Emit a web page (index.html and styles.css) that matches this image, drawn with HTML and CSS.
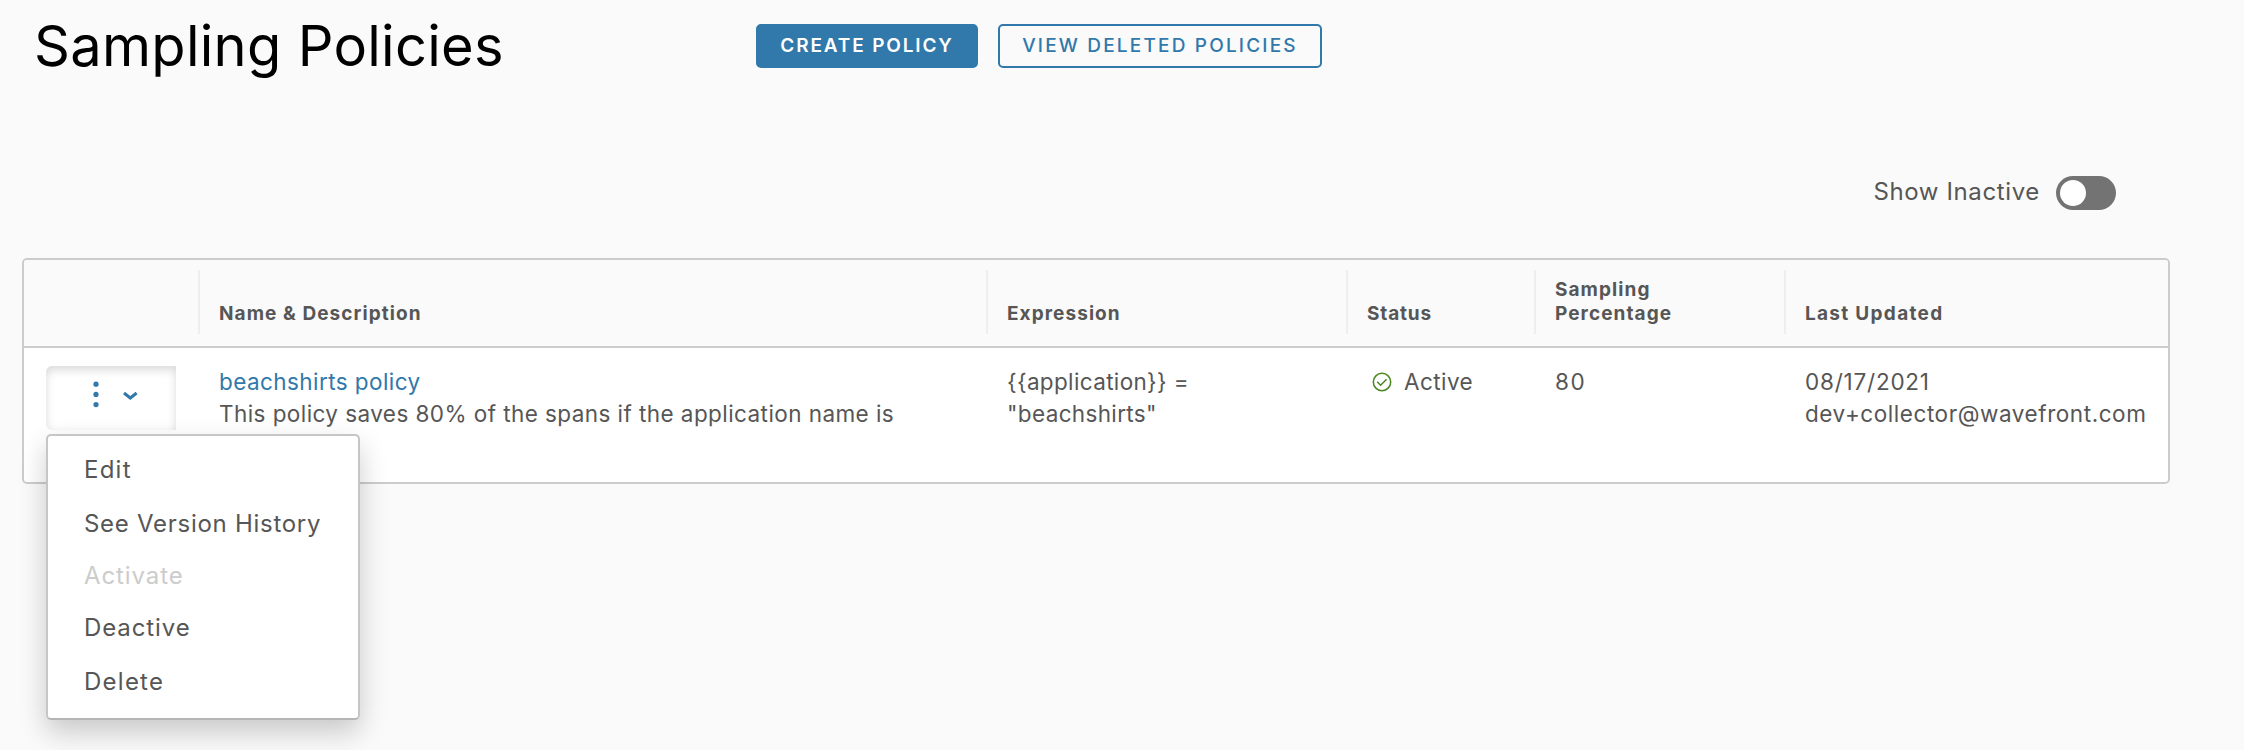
FILE: index.html
```
<!DOCTYPE html>
<html lang="en">
<head>
<meta charset="utf-8">
<title>Sampling Policies</title>
<link rel="stylesheet" href="styles.css">
</head>
<body>
<header class="page-header">
  <h1 class="page-title">Sampling Policies</h1>
  <button class="btn btn-primary">CREATE POLICY</button>
  <button class="btn btn-outline">VIEW DELETED POLICIES</button>
</header>

<div class="filters">
  <span class="toggle-label">Show Inactive</span>
  <span class="toggle" role="switch" aria-checked="false"><span class="toggle-knob"></span></span>
</div>

<main class="grid">
  <div class="grid-row grid-head">
    <div class="head-cell head-actions"></div>
    <div class="head-cell">Name &amp; Description</div>
    <div class="head-cell">Expression</div>
    <div class="head-cell head-status">Status</div>
    <div class="head-cell">Sampling<br>Percentage</div>
    <div class="head-cell head-updated">Last Updated</div>
  </div>
  <div class="grid-row grid-body">
    <div class="actions">
      <button class="actions-btn" aria-label="Actions">
        <svg class="actions-icon" width="130" height="64" viewBox="0 0 130 64">
          <g fill="#3178ab"><circle cx="50" cy="18.2" r="2.6"/><circle cx="50" cy="28.4" r="2.6"/><circle cx="50" cy="38.6" r="2.6"/></g>
          <path d="M78 27l6.3 5 6.3-5" fill="none" stroke="#3178ab" stroke-width="3"/>
        </svg>
      </button>
      <div class="menu">
        <div class="menu-item menu-wide">Edit</div>
        <div class="menu-item menu-history">See Version History</div>
        <div class="menu-item menu-disabled">Activate</div>
        <div class="menu-item">Deactive</div>
        <div class="menu-item menu-wide">Delete</div>
      </div>
    </div>
    <div class="cell"><a class="link">beachshirts policy</a><br>This policy saves 80% of the spans if the application name is</div>
    <div class="cell cell-expression">{{application}} =<br>"beachshirts"</div>
    <div class="cell cell-status">
      <svg class="status-icon" width="20" height="20" viewBox="0 0 20 20" fill="none" stroke="#4c8620" stroke-width="1.5">
        <circle cx="10" cy="10" r="8.7"/><path d="M5.2 9.8l3.4 3.4 6-6"/>
      </svg>
      <span>Active</span>
    </div>
    <div class="cell cell-number">80</div>
    <div class="cell cell-updated"><span class="date">08/17/2021</span><br>dev+collector@wavefront.com</div>
  </div>
</main>
</body>
</html>
```
FILE: styles.css
```
* { box-sizing: border-box; }
body {
  margin: 0;
  min-height: 750px;
  background: #fafafa;
  color: #565656;
  font-family: Inter, "Open Sans", sans-serif;
}
button { font-family: inherit; }

.page-header {
  display: flex;
  align-items: flex-start;
  height: 176px;
  padding: 12px 0 0 34px;
}
.page-title {
  width: 722px;
  margin: 0;
  font-size: 56px;
  font-weight: 400;
  line-height: 68px;
  letter-spacing: 0.29px;
  color: #000;
}
.btn {
  height: 44px;
  margin-top: 12px;
  padding: 0;
  border: 2px solid #3178ab;
  border-radius: 5px;
  font-size: 19px;
  line-height: 40px;
}
.btn-primary {
  width: 222px;
  background: #3178ab;
  color: #fff;
  font-weight: 600;
  letter-spacing: 1.85px;
}
.btn-outline {
  width: 324px;
  margin-left: 20px;
  background: transparent;
  color: #3178ab;
  font-weight: 500;
  letter-spacing: 2.18px;
}

.filters {
  display: flex;
  justify-content: flex-end;
  height: 82px;
  padding-right: 128px;
}
.toggle-label {
  margin-right: 16px;
  font-size: 24px;
  line-height: 32px;
  letter-spacing: 0.63px;
}
.toggle {
  width: 60px;
  height: 34px;
  padding: 4px;
  border-radius: 17px;
  background: #737373;
}
.toggle-knob {
  display: block;
  width: 26px;
  height: 26px;
  border-radius: 50%;
  background: #fff;
}

.grid {
  width: 2148px;
  height: 226px;
  margin-left: 22px;
  border: 2px solid #ccc;
  border-radius: 5px;
  background: #fff;
}
.grid-row {
  display: grid;
  grid-template-columns: 174px 788px 360px 188px 250px 1fr;
}
.grid-head {
  height: 88px;
  padding: 10px 0 12px;
  border-bottom: 2px solid #ccc;
  border-radius: 3px 3px 0 0;
  background: #fafafa;
}
.head-cell {
  display: flex;
  align-items: flex-end;
  padding: 0 0 8px 19px;
  border-left: 2px solid #eee;
  font-size: 19px;
  font-weight: 700;
  line-height: 24px;
  letter-spacing: 1.07px;
}
.head-actions { border-left: 0; }
.head-status { letter-spacing: 0.84px; }
.head-updated { letter-spacing: 1.3px; }

.grid-body { padding-top: 18px; }
.cell {
  padding-left: 21px;
  font-size: 22.5px;
  line-height: 32px;
  letter-spacing: 0.43px;
  white-space: nowrap;
}
.cell-expression { letter-spacing: 0.35px; }
.cell-status {
  display: flex;
  align-items: flex-start;
  padding-left: 26px;
}
.status-icon { margin: 6px 12px 0 0; }
.cell-number { letter-spacing: 1.6px; }
.cell-updated { letter-spacing: 0.56px; }
.date { letter-spacing: 0.78px; }
.link { color: #3178ab; }

.actions {
  position: relative;
  padding-left: 22px;
}
.actions-btn {
  display: block;
  width: 130px;
  height: 64px;
  padding: 0;
  border: 0;
  border-radius: 6px 0 0 6px;
  background: #fff;
  box-shadow: inset 0 4px 10px rgba(0, 0, 0, 0.15);
}
.actions-icon { display: block; }

.menu {
  position: absolute;
  top: 68px;
  left: 22px;
  width: 314px;
  height: 286px;
  padding: 7px 0 9px 36px;
  border: 2px solid #c6c6c6;
  border-bottom-color: #b5b5b5;
  border-radius: 5px;
  background: #fff;
  box-shadow: 0 12px 28px rgba(0, 0, 0, 0.2);
}
.menu-item {
  font-size: 24px;
  line-height: 54px;
  letter-spacing: 0.9px;
  white-space: nowrap;
}
.menu-wide { letter-spacing: 1.25px; }
.menu-history { letter-spacing: 0.72px; }
.menu-disabled {
  line-height: 50px;
  color: #ccc;
}
```
